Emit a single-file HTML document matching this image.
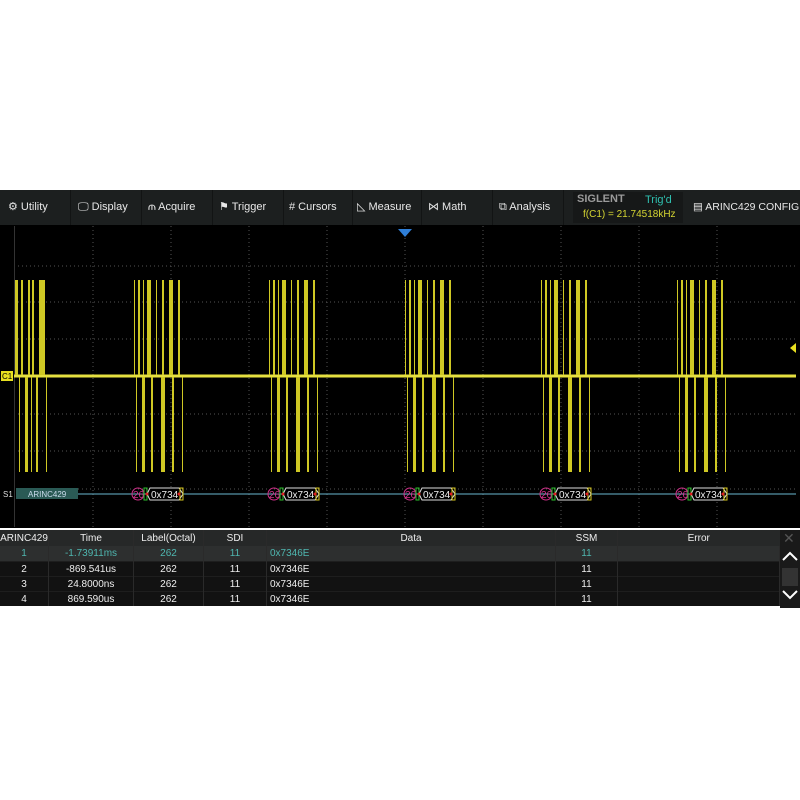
<!DOCTYPE html>
<html><head><meta charset="utf-8"><style>
body{margin:0;width:800px;height:800px;background:#fff;position:relative;overflow:hidden;font-family:"Liberation Sans",sans-serif;}
#tb{position:absolute;left:0;top:190px;width:800px;height:35px;background:#1c1f1f;color:#e8e8e8;font-size:11px}
.it{position:absolute;top:0;height:35px;line-height:34px;border-right:1px solid #121414;white-space:nowrap}
#plot{position:absolute;left:0;top:225px;width:800px;height:303px;background:#000}
table{position:absolute;left:0;top:530px;width:780px;border-collapse:collapse;font-size:10px;color:#eee}
td{height:14px;padding:0;text-align:center;border-right:1px solid #2a2a2a}
tr.h td{background:#262828;height:16px}
tr.s td{background:#2d2f2f;color:#4fb7b0;height:15px}
tr.r td{background:#121212;border-top:1px solid #1e1e1e}
</style></head><body>
<div id="tb">
<div class="it" style="left:0;width:70px"><span style="margin-left:8px">⚙ Utility</span></div>
<div class="it" style="left:71px;width:70px"><span style="margin-left:7px">🖵 Display</span></div>
<div class="it" style="left:142px;width:70px"><span style="margin-left:6px">⫙ Acquire</span></div>
<div class="it" style="left:213px;width:70px"><span style="margin-left:6px">⚑ Trigger</span></div>
<div class="it" style="left:284px;width:68px"><span style="margin-left:5px"># Cursors</span></div>
<div class="it" style="left:353px;width:68px"><span style="margin-left:4px">◺ Measure</span></div>
<div class="it" style="left:422px;width:70px"><span style="margin-left:6px">⋈ Math</span></div>
<div class="it" style="left:493px;width:70px"><span style="margin-left:6px">⧉ Analysis</span></div>
<div style="position:absolute;left:573px;top:2px;width:110px;height:31px;background:#161818">
<div style="position:absolute;left:4px;top:1px;font-weight:bold;color:#9a9a9a;font-size:11px">SIGLENT</div>
<div style="position:absolute;left:72px;top:2px;color:#2fc0b0;font-size:11px">Trig'd</div>
<div style="position:absolute;left:10px;top:17px;color:#d4d432;font-size:10px">f(C1) = 21.74518kHz</div></div>
<div class="it" style="left:688px;width:112px;border:none;font-size:10.5px"><span style="margin-left:5px">▤ ARINC429 CONFIG</span></div>
</div>
<div id="plot">
<svg width="800" height="303" style="position:absolute;left:0;top:0">
<defs>
<g id="b" fill="#cfc824">
<rect x="0" y="55" width="3" height="95"/><rect x="6" y="55" width="2" height="95"/><rect x="13" y="55" width="2" height="95"/><rect x="17" y="55" width="2" height="95"/><rect x="24" y="55" width="6" height="95"/>
<rect x="4" y="152" width="1" height="95"/><rect x="10" y="152" width="3" height="95"/><rect x="16" y="152" width="1" height="95"/><rect x="21" y="152" width="2" height="95"/><rect x="31" y="152" width="1" height="95"/>
</g>
<g id="c" fill="#cfc824">
<rect x="0" y="55" width="1" height="95"/><rect x="4" y="55" width="2" height="95"/><rect x="9" y="55" width="1" height="95"/><rect x="13" y="55" width="4" height="95"/><rect x="22" y="55" width="1" height="95"/><rect x="28" y="55" width="2" height="95"/><rect x="35" y="55" width="4" height="95"/><rect x="44" y="55" width="2" height="95"/>
<rect x="2" y="152" width="1" height="95"/><rect x="8" y="152" width="3" height="95"/><rect x="17" y="152" width="2" height="95"/><rect x="27" y="152" width="4" height="95"/><rect x="38" y="152" width="2" height="95"/><rect x="48" y="152" width="1" height="95"/>
</g>
<g id="d" font-size="10" font-family="Liberation Sans">
<circle cx="5" cy="0" r="6" fill="none" stroke="#d0308a"/><text x="0" y="4" fill="#d0308a">26</text>
<rect x="11" y="-6" width="3" height="12" fill="none" stroke="#2ec02e"/>
<path d="M17 -6 H46 L50 0 L46 6 H17 L14 0Z" fill="#000" stroke="#ddd"/><text x="18" y="4" fill="#eee">0x734</text>
<rect x="47" y="-6" width="3" height="12" fill="none" stroke="#d8c820"/><circle cx="14" cy="0" r="1.5" fill="#e02020"/><circle cx="46" cy="0" r="1.5" fill="#e02020"/>
</g></defs>
<g stroke="#555" stroke-dasharray="1,3" stroke-width="1">
<line x1="93" y1="1" x2="93" y2="302"/><line x1="171" y1="1" x2="171" y2="302"/><line x1="249" y1="1" x2="249" y2="302"/><line x1="327" y1="1" x2="327" y2="302"/><line x1="405" y1="1" x2="405" y2="302"/><line x1="483" y1="1" x2="483" y2="302"/><line x1="561" y1="1" x2="561" y2="302"/><line x1="639" y1="1" x2="639" y2="302"/><line x1="717" y1="1" x2="717" y2="302"/>
<line x1="14" y1="41" x2="796" y2="41"/><line x1="14" y1="77" x2="796" y2="77"/><line x1="14" y1="114" x2="796" y2="114"/><line x1="14" y1="189" x2="796" y2="189"/><line x1="14" y1="226" x2="796" y2="226"/><line x1="14" y1="264" x2="796" y2="264"/>
</g>
<line x1="14.5" y1="1" x2="14.5" y2="302" stroke="#333"/>
<polygon points="398,4 412,4 405,12" fill="#2f7fd8"/>
<polygon points="796,118 790,123 796,128" fill="#e8e020"/>
<line x1="14" y1="151" x2="796" y2="151" stroke="#e6e040" stroke-width="3"/>
<use href="#b" x="15"/>
<use href="#c" x="134"/><use href="#c" x="269"/><use href="#c" x="405"/><use href="#c" x="541"/><use href="#c" x="677"/>
<line x1="78" y1="269" x2="796" y2="269" stroke="#6ab8d0"/>
<rect x="16" y="263" width="62" height="11" fill="#2a5a55"/>
<text x="28" y="272" font-size="8" fill="#cde" font-family="Liberation Sans">ARINC429</text>
<text x="3" y="272" font-size="8" fill="#ddd" font-family="Liberation Sans">S1</text>
<use href="#d" x="133" y="269"/><use href="#d" x="269" y="269"/><use href="#d" x="405" y="269"/><use href="#d" x="541" y="269"/><use href="#d" x="677" y="269"/>
<rect x="1" y="146" width="12" height="10" fill="#e8e020"/><text x="2" y="154" font-size="8" fill="#000" font-family="Liberation Sans">C1</text>
</svg>
</div>
<table>
<tr class="h"><td style="width:48px">ARINC429</td><td style="width:84px">Time</td><td style="width:69px">Label(Octal)</td><td style="width:62px">SDI</td><td style="width:288px">Data</td><td style="width:61px">SSM</td><td style="border:none">Error</td></tr>
<tr class="s"><td>1</td><td>-1.73911ms</td><td>262</td><td>11</td><td style="text-align:left;padding-left:3px">0x7346E</td><td>11</td><td></td></tr>
<tr class="r"><td>2</td><td>-869.541us</td><td>262</td><td>11</td><td style="text-align:left;padding-left:3px">0x7346E</td><td>11</td><td></td></tr>
<tr class="r"><td>3</td><td>24.8000ns</td><td>262</td><td>11</td><td style="text-align:left;padding-left:3px">0x7346E</td><td>11</td><td></td></tr>
<tr class="r"><td>4</td><td>869.590us</td><td>262</td><td>11</td><td style="text-align:left;padding-left:3px">0x7346E</td><td>11</td><td></td></tr>
</table>
<div style="position:absolute;left:780px;top:530px;width:20px;height:78px;background:#1a1a1a">
<div style="position:absolute;left:3px;top:0;color:#555;font-size:14px">✕</div>
<svg width="20" height="78" style="position:absolute;left:0;top:0"><path d="M3 30 L10 23 L17 30" stroke="#fff" stroke-width="2" fill="none"/><path d="M3 61 L10 68 L17 61" stroke="#fff" stroke-width="2" fill="none"/></svg>
<div style="position:absolute;left:2px;top:38px;width:16px;height:18px;background:#333"></div>
</div>
</body></html>
